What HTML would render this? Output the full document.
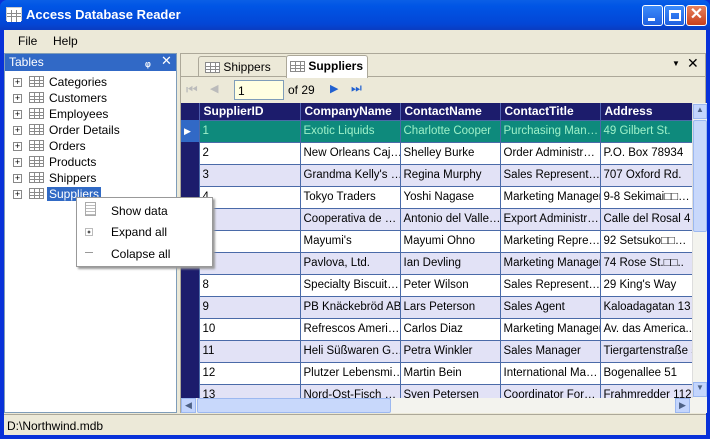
<!DOCTYPE html>
<html><head><meta charset="utf-8"><style>
*{box-sizing:border-box;margin:0;padding:0}
body{width:710px;height:439px;overflow:hidden;background:#0831d9;font-family:"Liberation Sans",sans-serif;font-size:12px;position:relative}
.a{position:absolute}
.title{left:0;top:0;width:710px;height:30px;background:linear-gradient(#0a5fe6,#0055e5 20%,#0346d6 80%,#0a3cc0);border-radius:7px 7px 0 0}
.title .t{left:26px;top:7px;color:#fff;font-weight:bold;font-size:13px}
.client{left:4px;top:30px;width:702px;height:405px;background:#ece9d8}
.tb{width:21px;height:21px;top:5px;border:1px solid #fff;border-radius:3px;background:linear-gradient(#3c8cfb,#1f5fe0)}
.grid{border-collapse:collapse;table-layout:fixed}
.grid td{height:22px;border:1px solid #4a6aa8;padding:0 3px;white-space:nowrap;overflow:hidden;text-overflow:clip;color:#000;font-size:11.5px;background:#fff}
.grid th{height:17px;background:#1c1c6c;color:#fff;text-align:left;padding:0 4px;border-right:1px solid #5060b0;font-size:12px;white-space:nowrap;overflow:hidden}
.grid tr.alt td{background:#e2e2f6}
.grid tr.sel td{background:#0e8a7c;color:#9df0c8}
.grid tr td.rh{background:#1c1c6c;border:none}
.ti{display:inline-block;width:15px;height:11px;border:1px solid #8a8a8a;background:
linear-gradient(#8a8a8a,#8a8a8a) 0 3px/100% 1px no-repeat,
linear-gradient(#8a8a8a,#8a8a8a) 0 6px/100% 1px no-repeat,
linear-gradient(90deg,#8a8a8a,#8a8a8a) 4px 0/1px 100% no-repeat,
linear-gradient(90deg,#8a8a8a,#8a8a8a) 9px 0/1px 100% no-repeat,#fff;vertical-align:middle}
.tree div{height:16px;line-height:16px;font-size:12px;position:relative;padding-left:44px}
.tree .pl{position:absolute;left:8px;top:4px;width:9px;height:9px;border:1px solid #888;background:#fff;font-size:9px;line-height:7px;text-align:center}
.tree .ti{position:absolute;left:24px;top:2px}
</style></head><body>
<div class="a title">
 <div class="a" style="left:6px;top:7px;width:16px;height:14px;background:#fff;border:1px solid #ccc"><span class="ti" style="width:14px;height:12px;border:none"></span></div>
 <div class="a t">Access Database Reader</div>
 <div class="a tb" style="left:642px"><div class="a" style="left:5px;top:12px;width:7px;height:3px;background:#fff"></div></div>
 <div class="a tb" style="left:664px"><div class="a" style="left:4px;top:4px;width:12px;height:11px;border:2px solid #fff;border-top-width:3px"></div></div>
 <div class="a tb" style="left:686px;background:linear-gradient(#e8825e,#c8401c);color:#fff;font-size:16px;font-weight:bold;text-align:center;line-height:18px">✕</div>
</div>
<div class="a client">
 <div class="a" style="left:14px;top:4px;font-size:12px">File</div>
 <div class="a" style="left:49px;top:4px;font-size:12px">Help</div>
 <div class="a" style="left:0;top:23px;width:173px;height:360px;background:#fff;border:1px solid #7f9db9">
  <div class="a" style="left:0;top:0;width:171px;height:17px;background:#3169c6;color:#fff;font-size:12px;padding-left:4px;line-height:16px">Tables<span class="a" style="left:140px;top:0;font-weight:bold">ᵩ</span><span class="a" style="left:156px;top:-1px;font-size:13px">✕</span></div>
  <div class="a tree" style="left:0;top:20px;width:171px">
   <div><span class="pl">+</span><span class="ti"></span>Categories</div>
   <div><span class="pl">+</span><span class="ti"></span>Customers</div>
   <div><span class="pl">+</span><span class="ti"></span>Employees</div>
   <div><span class="pl">+</span><span class="ti"></span>Order Details</div>
   <div><span class="pl">+</span><span class="ti"></span>Orders</div>
   <div><span class="pl">+</span><span class="ti"></span>Products</div>
   <div><span class="pl">+</span><span class="ti"></span>Shippers</div>
   <div><span class="pl">+</span><span class="ti"></span><span style="background:#316ac5;color:#fff;padding:0 2px;margin-left:-2px">Suppliers</span></div>
  </div>
 </div>
 <div class="a" style="left:176px;top:23px;width:526px;height:360px;border:1px solid #aca899;background:#ece9d8"></div>
 <div class="a" style="left:194px;top:26px;width:90px;height:21px;border:1px solid #aca899;border-bottom:none;border-radius:3px 3px 0 0;background:#ece9d8"></div>
 <div class="a" style="left:201px;top:30px;font-size:12px"><span class="ti"></span> Shippers</div>
 <div class="a" style="left:282px;top:25px;width:82px;height:23px;border:1px solid #aca899;border-bottom:none;border-radius:3px 3px 0 0;background:#fff"></div>
 <div class="a" style="left:286px;top:29px;font-size:12px;font-weight:bold"><span class="ti"></span> Suppliers</div>
 <div class="a" style="left:177px;top:46px;width:105px;height:1px;background:#aca899"></div>
 <div class="a" style="left:364px;top:46px;width:337px;height:1px;background:#aca899"></div>
 <div class="a" style="left:668px;top:29px;font-size:8px">▼</div>
 <div class="a" style="left:683px;top:25px;font-size:14px">✕</div>
 <div class="a" style="left:182px;top:52px;color:#bbb;font-size:13px">⏮</div>
 <div class="a" style="left:206px;top:52px;color:#bbb;font-size:11px">◀</div>
 <div class="a" style="left:230px;top:50px;width:50px;height:20px;background:#ffffe1;border:1px solid #7f9db9;padding:3px 3px;font-size:12px">1</div>
 <div class="a" style="left:284px;top:53px;font-size:12px">of 29</div>
 <div class="a" style="left:326px;top:52px;color:#2060d0;font-size:11px">▶</div>
 <div class="a" style="left:347px;top:51px;color:#2060d0;font-size:12px">⏭</div>
 <div class="a" style="left:177px;top:73px;width:511px;height:295px;overflow:hidden;background:#fff">
  <table class="grid" style="width:511px">
   <colgroup><col style="width:18px"><col style="width:101px"><col style="width:100px"><col style="width:100px"><col style="width:100px"><col style="width:92px"></colgroup>
   <tr><th></th><th>SupplierID</th><th>CompanyName</th><th>ContactName</th><th>ContactTitle</th><th>Address</th></tr>
   <tr class="sel"><td class="rh" style="background:#3169c6;color:#fff;font-size:9px">▶</td><td>1</td><td>Exotic Liquids</td><td>Charlotte Cooper</td><td>Purchasing Man…</td><td>49 Gilbert St.</td></tr>
   <tr><td class="rh"></td><td>2</td><td>New Orleans Caj…</td><td>Shelley Burke</td><td>Order Administr…</td><td>P.O. Box 78934</td></tr>
   <tr class="alt"><td class="rh"></td><td>3</td><td>Grandma Kelly's …</td><td>Regina Murphy</td><td>Sales Represent…</td><td>707 Oxford Rd.</td></tr>
   <tr><td class="rh"></td><td>4</td><td>Tokyo Traders</td><td>Yoshi Nagase</td><td>Marketing Manager</td><td>9-8 Sekimai□□…</td></tr>
   <tr class="alt"><td class="rh"></td><td>5</td><td>Cooperativa de …</td><td>Antonio del Valle…</td><td>Export Administr…</td><td>Calle del Rosal 4</td></tr>
   <tr><td class="rh"></td><td>6</td><td>Mayumi's</td><td>Mayumi Ohno</td><td>Marketing Repre…</td><td>92 Setsuko□□…</td></tr>
   <tr class="alt"><td class="rh"></td><td>7</td><td>Pavlova, Ltd.</td><td>Ian Devling</td><td>Marketing Manager</td><td>74 Rose St.□□..</td></tr>
   <tr><td class="rh"></td><td>8</td><td>Specialty Biscuit…</td><td>Peter Wilson</td><td>Sales Represent…</td><td>29 King's Way</td></tr>
   <tr class="alt"><td class="rh"></td><td>9</td><td>PB Knäckebröd AB</td><td>Lars Peterson</td><td>Sales Agent</td><td>Kaloadagatan 13</td></tr>
   <tr><td class="rh"></td><td>10</td><td>Refrescos Ameri…</td><td>Carlos Diaz</td><td>Marketing Manager</td><td>Av. das America..</td></tr>
   <tr class="alt"><td class="rh"></td><td>11</td><td>Heli Süßwaren G…</td><td>Petra Winkler</td><td>Sales Manager</td><td>Tiergartenstraße 5</td></tr>
   <tr><td class="rh"></td><td>12</td><td>Plutzer Lebensmi…</td><td>Martin Bein</td><td>International Ma…</td><td>Bogenallee 51</td></tr>
   <tr class="alt"><td class="rh"></td><td>13</td><td>Nord-Ost-Fisch …</td><td>Sven Petersen</td><td>Coordinator For…</td><td>Frahmredder 112a</td></tr>
  </table>
 </div>
 <div class="a" style="left:688px;top:73px;width:15px;height:295px;background:#f3f3ee;border-left:1px solid #ddd"></div>
 <div class="a" style="left:689px;top:74px;width:14px;height:15px;background:#c3d5fd;border:1px solid #9cb8f0;color:#4d6185;font-size:8px;text-align:center">▲</div>
 <div class="a" style="left:689px;top:90px;width:14px;height:112px;background:#c8d8fb;border:1px solid #9cb8f0;border-radius:2px"></div>
 <div class="a" style="left:689px;top:352px;width:14px;height:15px;background:#c3d5fd;border:1px solid #9cb8f0;color:#4d6185;font-size:8px;text-align:center">▼</div>
 <div class="a" style="left:177px;top:368px;width:526px;height:15px;background:#f3f3ee"></div>
 <div class="a" style="left:177px;top:368px;width:15px;height:15px;background:#c3d5fd;border:1px solid #9cb8f0;color:#4d6185;font-size:9px;text-align:center;line-height:13px">◀</div>
 <div class="a" style="left:193px;top:368px;width:194px;height:15px;background:#c8d8fb;border:1px solid #9cb8f0;border-radius:2px"></div>
 <div class="a" style="left:671px;top:368px;width:15px;height:15px;background:#c3d5fd;border:1px solid #9cb8f0;color:#4d6185;font-size:9px;text-align:center;line-height:13px">▶</div>
 <div class="a" style="left:0;top:384px;width:702px;height:1px;background:#aca899"></div>
 <div class="a" style="left:3px;top:389px;font-size:12px">D:\Northwind.mdb</div>
 <div class="a" style="left:72px;top:167px;width:137px;height:70px;background:#fff;border:1px solid #999;box-shadow:2px 2px 2px #999;font-size:12px;z-index:10">
  <div class="a" style="left:8px;top:4px;width:11px;height:14px;border:1px solid #aaa;background:repeating-linear-gradient(#fff 0 2px,#bbb 2px 3px)"></div>
  <div class="a" style="left:34px;top:6px">Show data</div>
  <div class="a" style="left:8px;top:30px;width:8px;height:8px;border:1px solid #bbb;background:radial-gradient(#555 30%,#fff 35%)"></div>
  <div class="a" style="left:34px;top:27px">Expand all</div>
  <div class="a" style="left:8px;top:54px;width:8px;height:1px;background:#999"></div>
  <div class="a" style="left:34px;top:49px">Colapse all</div>
 </div>
</div>
</body></html>
